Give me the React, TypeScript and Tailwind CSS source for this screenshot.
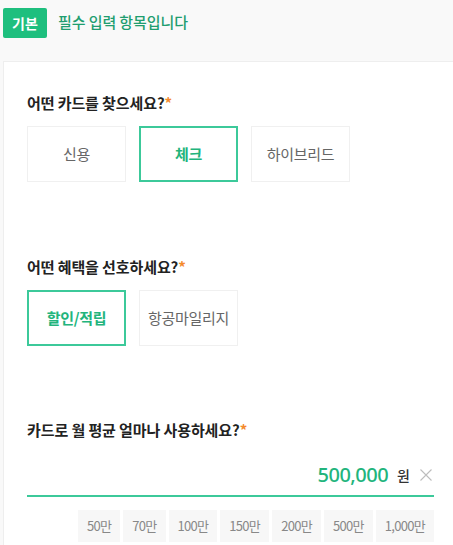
const kr = "font-['Noto_Sans_CJK_KR','Noto_Sans',sans-serif]";

function Question({ label }: { label: string }) {
  return (
    <p className="text-[15px] font-bold leading-[22px] tracking-[-0.1px] text-[#222]">
      {label}
      <span className="text-[#f48a2c]">*</span>
    </p>
  );
}

function Choice({ label, active }: { label: string; active?: boolean }) {
  return (
    <button
      className={
        active
          ? "flex h-[56px] w-[99px] items-center justify-center border-2 border-[#3cc99a] text-[15px] font-bold tracking-[-0.3px] text-[#22b47c]"
          : "flex h-[56px] w-[99px] items-center justify-center border border-[#f0f0f0] text-[15px] tracking-[-0.3px] text-[#666]"
      }
    >
      {label}
    </button>
  );
}

const amounts = ["50만", "70만", "100만", "150만", "200만", "500만", "1,000만"];

export default function App() {
  return (
    <div className={`min-h-screen bg-[#f9f9f9] pl-[3px] ${kr}`}>
      <div className="flex h-[61px] items-start gap-[11px] pt-[8px]">
        <span className="flex h-[30px] w-[44px] items-center justify-center rounded-[2px] bg-[#1ebf7e] text-[14px] font-bold text-white">
          기본
        </span>
        <span className="mt-[3px] text-[15px] font-medium leading-[22px] tracking-[-0.1px] text-[#1f9e70]">
          필수 입력 항목입니다
        </span>
      </div>

      <div className="border border-r-0 border-[#eeeeee] bg-white pb-[40px] pl-[23px] pr-[19px] pt-[30px]">
        <Question label="어떤 카드를 찾으세요?" />
        <div className="mt-[12px] flex gap-[13px]">
          <Choice label="신용" />
          <Choice label="체크" active />
          <Choice label="하이브리드" />
        </div>

        <div className="mt-[74px]">
          <Question label="어떤 혜택을 선호하세요?" />
        </div>
        <div className="mt-[12px] flex gap-[13px]">
          <Choice label="할인/적립" active />
          <Choice label="항공마일리지" />
        </div>

        <div className="mt-[73px]">
          <Question label="카드로 월 평균 얼마나 사용하세요?" />
        </div>
        <div className="mt-[14px] flex h-[42px] items-center justify-end border-b-2 border-[#3cc99a] pr-[2px]">
          <span className="font-['Noto_Sans',sans-serif] text-[20px] font-medium tracking-[-0.5px] text-[#22b47c]">
            500,000
          </span>
          <span className="ml-[9px] text-[14px] font-medium text-[#333]">원</span>
          <svg className="ml-[10px]" width="12" height="12" viewBox="0 0 12 12" fill="none">
            <path d="M0.5 0.5 11.5 11.5M11.5 0.5 0.5 11.5" stroke="#bdbdbd" strokeWidth="1.1" />
          </svg>
        </div>
        <div className="mt-[13px] flex justify-end gap-[3px]">
          {amounts.map((a) => (
            <span
              key={a}
              className="flex h-[32px] items-center bg-[#f7f7f7] px-[9px] text-[13px] tracking-[-0.7px] text-[#888]"
            >
              {a}
            </span>
          ))}
        </div>
      </div>
    </div>
  );
}
